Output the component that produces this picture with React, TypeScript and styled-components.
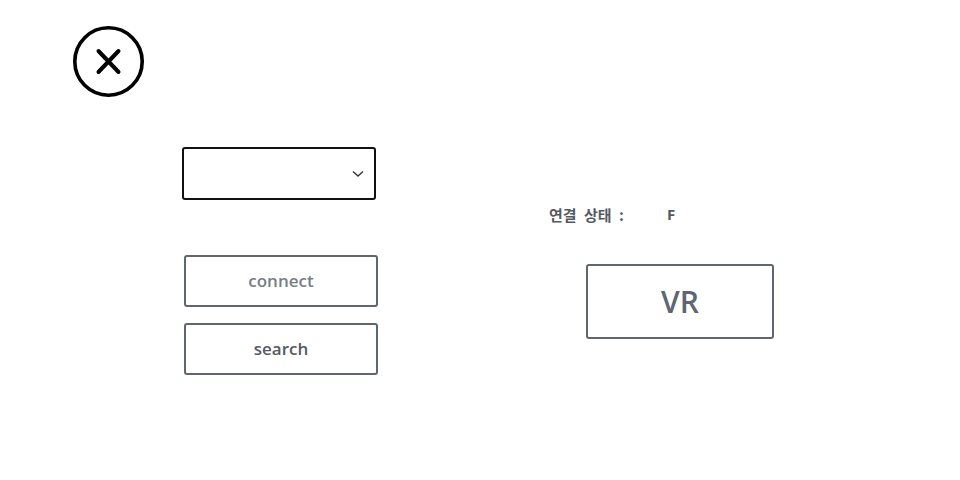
import React from "react";
import styled, { createGlobalStyle } from "styled-components";

const Global = createGlobalStyle`
  html, body { margin: 0; padding: 0; background: #ffffff; }
  body { font-family: "Open Sans", "Noto Sans CJK KR", sans-serif; }
`;

const Page = styled.div`
  width: 960px;
  height: 480px;
  box-sizing: border-box;
  padding: 26px 0 0 73px;
  display: flex;
  flex-direction: column;
`;

const CloseButton = styled.button`
  width: 71px;
  height: 71px;
  padding: 0;
  border: none;
  background: none;
  cursor: pointer;
  display: block;
`;

const Main = styled.div`
  display: flex;
  margin-top: 50px;
  padding-left: 109px;
`;

const LeftColumn = styled.div`
  width: 195px;
  display: flex;
  flex-direction: column;
`;

const SelectBox = styled.div`
  width: 194px;
  height: 53px;
  box-sizing: border-box;
  border: 2px solid #111111;
  border-radius: 3px;
  display: flex;
  align-items: center;
  justify-content: flex-end;
  padding-right: 10px;
`;

const OutlineButton = styled.button<{ $muted?: boolean; $top: number }>`
  width: 194px;
  height: 52px;
  margin-left: 2px;
  margin-top: ${(p) => p.$top}px;
  box-sizing: border-box;
  border: 2px solid #5f666f;
  border-radius: 3px;
  background: #ffffff;
  font-family: "Open Sans", sans-serif;
  font-weight: 600;
  font-size: 17px;
  color: ${(p) => (p.$muted ? "#777e88" : "#535a63")};
  display: flex;
  align-items: center;
  justify-content: center;
  padding: 0 0 1px 0;
`;

const RightColumn = styled.div`
  margin-left: 172px;
  padding-top: 55px;
  display: flex;
  flex-direction: column;
`;

const StatusRow = styled.div`
  display: flex;
  align-items: center;
  height: 24px;
  font-family: "Noto Sans CJK KR", "Open Sans", sans-serif;
  font-weight: 700;
  font-size: 15px;
  color: #555a60;
`;

const StatusLabel = styled.span`
  width: 118px;
  word-spacing: 4px;
`;

const StatusValue = styled.span`
  font-family: "Open Sans", sans-serif;
  font-weight: 700;
  font-size: 15px;
`;

const VRButton = styled.button`
  width: 188px;
  height: 75px;
  margin-left: 37px;
  margin-top: 38px;
  box-sizing: border-box;
  border: 2px solid #5f666f;
  border-radius: 3px;
  background: #ffffff;
  font-family: "Open Sans", sans-serif;
  font-weight: 600;
  font-size: 30px;
  color: #5f666f;
  display: flex;
  align-items: center;
  justify-content: center;
  padding: 0;
`;

export default function App() {
  return (
    <>
      <Global />
      <Page>
        <CloseButton aria-label="close">
          <svg width="71" height="71" viewBox="0 0 71 71">
            <circle cx="35.5" cy="35.5" r="33.7" fill="none" stroke="#000" strokeWidth="3.6" />
            <path d="M25.5 25 L45.5 46 M45.5 25 L25.5 46" stroke="#000" strokeWidth="4" strokeLinecap="round" />
          </svg>
        </CloseButton>
        <Main>
          <LeftColumn>
            <SelectBox>
              <svg width="12" height="8" viewBox="0 0 12 8">
                <path d="M1 1.5 L6 6 L11 1.5" fill="none" stroke="#333" strokeWidth="1.4" />
              </svg>
            </SelectBox>
            <OutlineButton $muted $top={55}>connect</OutlineButton>
            <OutlineButton $top={16}>search</OutlineButton>
          </LeftColumn>
          <RightColumn>
            <StatusRow>
              <StatusLabel>연결 상태 :</StatusLabel>
              <StatusValue>F</StatusValue>
            </StatusRow>
            <VRButton>VR</VRButton>
          </RightColumn>
        </Main>
      </Page>
    </>
  );
}
